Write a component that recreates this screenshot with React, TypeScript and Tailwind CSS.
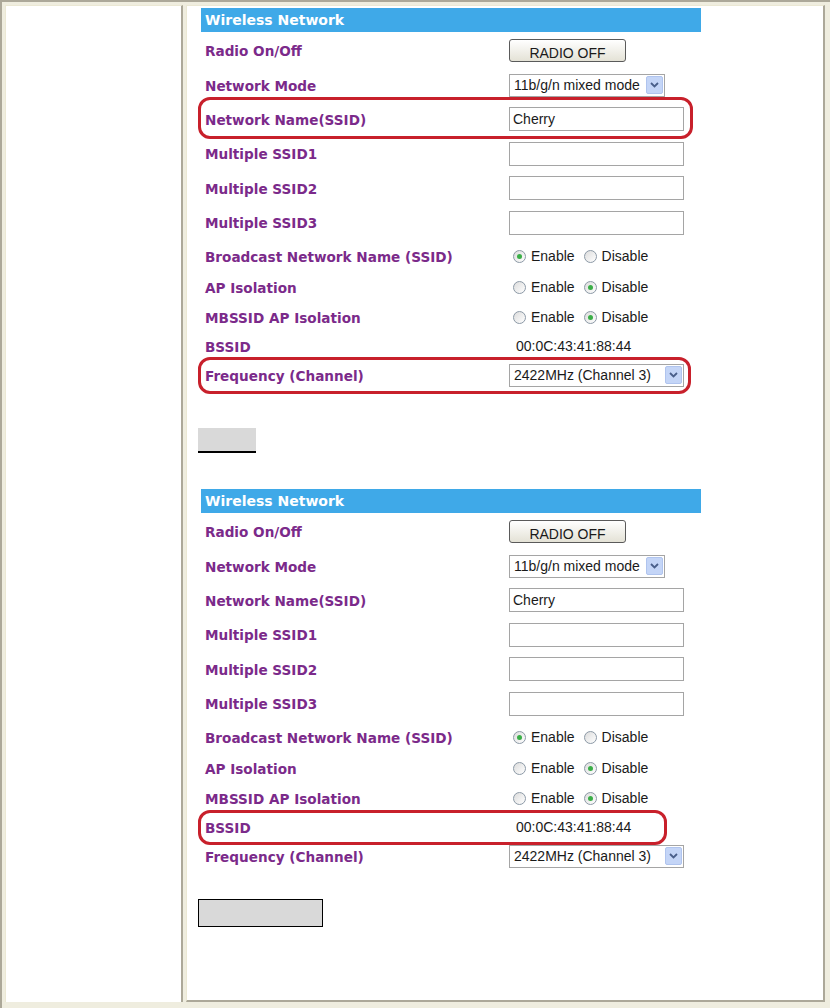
import React from 'react'

const label = "text-[13.6px] font-bold text-[#7b2a8a] [font-family:'DejaVu_Sans',Verdana,sans-serif]"
const value = "text-[14px] text-[#1a1a1a] [font-family:'Liberation_Sans',Arial,sans-serif]"

function Arrow() {
  return (
    <span className="flex h-[18px] w-[17px] items-center justify-center rounded-[2px] bg-[#c4d5f7] border border-[#b0c4ee]">
      <svg width="9" height="6" viewBox="0 0 9 6">
        <path d="M1 1 L4.5 4.5 L8 1" fill="none" stroke="#4a5f8a" strokeWidth="1.8" />
      </svg>
    </span>
  )
}

function Select({ text, wide }: { text: string; wide?: boolean }) {
  return (
    <div
      className={
        'flex h-[23px] items-center justify-between border border-[#a5a5a5] bg-white pl-[4px] pr-[1px] ' +
        (wide ? 'w-[175px]' : 'w-[156px]')
      }
    >
      <span className={value}>{text}</span>
      <Arrow />
    </div>
  )
}

function TextBox({ text }: { text?: string }) {
  return (
    <div className="flex h-[24px] w-[175px] items-center border border-[#a5a5a5] bg-white pl-[3px]">
      <span className={value}>{text}</span>
    </div>
  )
}

function Radio({ checked, text }: { checked?: boolean; text: string }) {
  return (
    <span className="flex items-center gap-[5px]">
      <span className="flex h-[13px] w-[13px] items-center justify-center rounded-full border border-[#8c99a6] bg-gradient-to-br from-[#dcdcdc] to-white">
        {checked && <span className="h-[5px] w-[5px] rounded-full bg-[#3aae47]" />}
      </span>
      <span className={value}>{text}</span>
    </span>
  )
}

function Radios({ enabled }: { enabled: boolean }) {
  return (
    <div className="flex items-center gap-[9px] pl-[4px]">
      <Radio checked={enabled} text="Enable" />
      <Radio checked={!enabled} text="Disable" />
    </div>
  )
}

type RowProps = {
  name: string
  h: string
  children?: React.ReactNode
  ring?: string
}

function Row({ name, h, children, ring }: RowProps) {
  return (
    <div className={'relative flex items-center ' + h}>
      <div className={'w-[308px] pl-[4px] pt-[2px] ' + label}>{name}</div>
      <div className="flex items-center">{children}</div>
      {ring && (
        <div className={'pointer-events-none absolute left-[-3px] rounded-[12px] border-[3px] border-[#c8202b] ' + ring} />
      )}
    </div>
  )
}

function WirelessTable({ ringName, ringFreq, ringBssid }: { ringName?: boolean; ringFreq?: boolean; ringBssid?: boolean }) {
  return (
    <div className="ml-[3px] w-[500px]">
      <div className="flex h-[24px] items-center bg-[#3fa9e8] pl-[4px] text-[14px] font-bold text-white [font-family:'DejaVu_Sans',Verdana,sans-serif]">
        Wireless Network
      </div>
      <Row name="Radio On/Off" h="h-[36px]">
        <button className="h-[23px] w-[117px] rounded-[3px] border border-[#5a5a5a] bg-gradient-to-b from-white to-[#e4e2d6]">
          <span className={value}>RADIO OFF</span>
        </button>
      </Row>
      <Row name="Network Mode" h="h-[34px]">
        <Select text="11b/g/n mixed mode" />
      </Row>
      <Row name="Network Name(SSID)" h="h-[34px]" ring={ringName ? 'top-[-5px] h-[42px] w-[495px]' : undefined}>
        <TextBox text="Cherry" />
      </Row>
      <Row name="Multiple SSID1" h="h-[35px]">
        <TextBox />
      </Row>
      <Row name="Multiple SSID2" h="h-[34px]">
        <TextBox />
      </Row>
      <Row name="Multiple SSID3" h="h-[35px]">
        <TextBox />
      </Row>
      <Row name="Broadcast Network Name (SSID)" h="h-[32px]">
        <Radios enabled />
      </Row>
      <Row name="AP Isolation" h="h-[30px]">
        <Radios enabled={false} />
      </Row>
      <Row name="MBSSID AP Isolation" h="h-[30px]">
        <Radios enabled={false} />
      </Row>
      <Row name="BSSID" h="h-[28px]" ring={ringBssid ? 'top-[-3px] h-[35px] w-[469px]' : undefined}>
        <span className={'pl-[7px] ' + value}>00:0C:43:41:88:44</span>
      </Row>
      <Row name="Frequency (Channel)" h="h-[30px]" ring={ringFreq ? 'top-[-3px] h-[37px] w-[493px]' : undefined}>
        <Select text="2422MHz (Channel 3)" wide />
      </Row>
    </div>
  )
}

export default function App() {
  return (
    <div className="box-border flex h-[1008px] w-[830px] gap-[3px] border-l-2 border-t-2 border-[#aca899] bg-[#efeddf] pb-[6px] pl-[3px] pr-[5px] pt-[3px]">
      <div className="w-[178px] shrink-0 border-l border-t border-[#ebe8d4] border-r-2 border-r-[#aca899] bg-white" />
      <div className="flex-1 border-l border-t border-[#ebe8d4] border-b-2 border-r-2 border-b-[#aca899] border-r-[#aca899] bg-white pl-[11px] pt-[2px]">
        <WirelessTable ringName ringFreq />
        <div className="mt-[38px] h-[25px] w-[58px] border-b-2 border-black bg-[#d9d9d9]" />
        <div className="mt-[36px]">
          <WirelessTable ringBssid />
        </div>
        <div className="mt-[28px] h-[28px] w-[125px] border border-black bg-[#d9d9d9]" />
      </div>
    </div>
  )
}
